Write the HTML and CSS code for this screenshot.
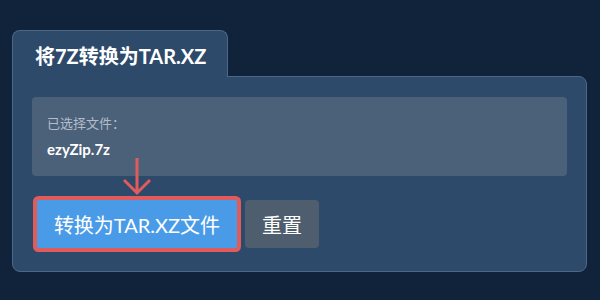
FILE: index.html
```html
<!DOCTYPE html>
<html lang="zh-CN">
<head>
    <meta charset="UTF-8">
    <meta name="viewport" content="width=device-width, initial-scale=1.0">
    <title>将7Z转换为TAR.XZ</title>
    <link rel="stylesheet" href="styles.css">
</head>
<body>
    <div class="converter">
        <div class="tab">将7Z转换为TAR.XZ</div>
        <div class="panel">
            <div class="file-box">
                <div class="file-label">已选择文件：</div>
                <div class="file-name">ezyZip.7z</div>
            </div>
            <div class="actions">
                <svg class="arrow" width="30" height="38" viewBox="0 0 30 38">
                    <path d="M14 0 V34 M1 22 L14 35 L27 22" fill="none" stroke="#e05c5c" stroke-width="3"/>
                </svg>
                <button class="button button-convert">转换为TAR.XZ文件</button>
                <button class="button button-reset">重置</button>
            </div>
        </div>
    </div>
</body>
</html>
```

FILE: styles.css
```css
body {
    font-family: Lato, "Noto Sans CJK SC", sans-serif;
    margin: 0;
    padding: 30px 13px 0 12px;
    background-color: #11233a;
    color: #fff;
}

.converter {
    width: 575px;
}

.tab {
    display: inline-block;
    box-sizing: border-box;
    width: 216px;
    height: 47px;
    padding: 10px 0 0 22px;
    background-color: #2d4a6a;
    border: 1px solid #4c6787;
    border-bottom: none;
    border-radius: 8px 8px 0 0;
    font-size: 20px;
    font-weight: bold;
    position: relative;
    z-index: 1;
}

.panel {
    margin-top: -1px;
    padding: 20px 19px 23px 19px;
    background-color: #2d4a6a;
    border: 1px solid #4c6787;
    border-radius: 0 8px 8px 8px;
}

.file-box {
    height: 79px;
    box-sizing: border-box;
    padding: 17px 15px 0 15px;
    background-color: #4b6079;
    border-radius: 4px;
}

.file-label {
    font-size: 13px;
    color: #b3bdca;
    line-height: 18px;
}

.file-name {
    margin-top: 8px;
    font-size: 15px;
    font-weight: bold;
    line-height: 18px;
}

.actions {
    position: relative;
    display: flex;
    gap: 8px;
    margin-top: 24px;
    padding-left: 5px;
}

.arrow {
    position: absolute;
    left: 91px;
    top: -42px;
}

.button {
    height: 48px;
    border: none;
    border-radius: 3px;
    color: #fff;
    font-family: Lato, "Noto Sans CJK SC", sans-serif;
    font-size: 20px;
    cursor: pointer;
}

.button-convert {
    width: 200px;
    padding: 0;
    background-color: #4a9be7;
    box-shadow: 0 0 0 4px #e05c5c;
    border-radius: 2px;
}

.button-reset {
    width: 74px;
    padding: 0;
    background-color: #4f5e6e;
    border-radius: 4px;
}
```
